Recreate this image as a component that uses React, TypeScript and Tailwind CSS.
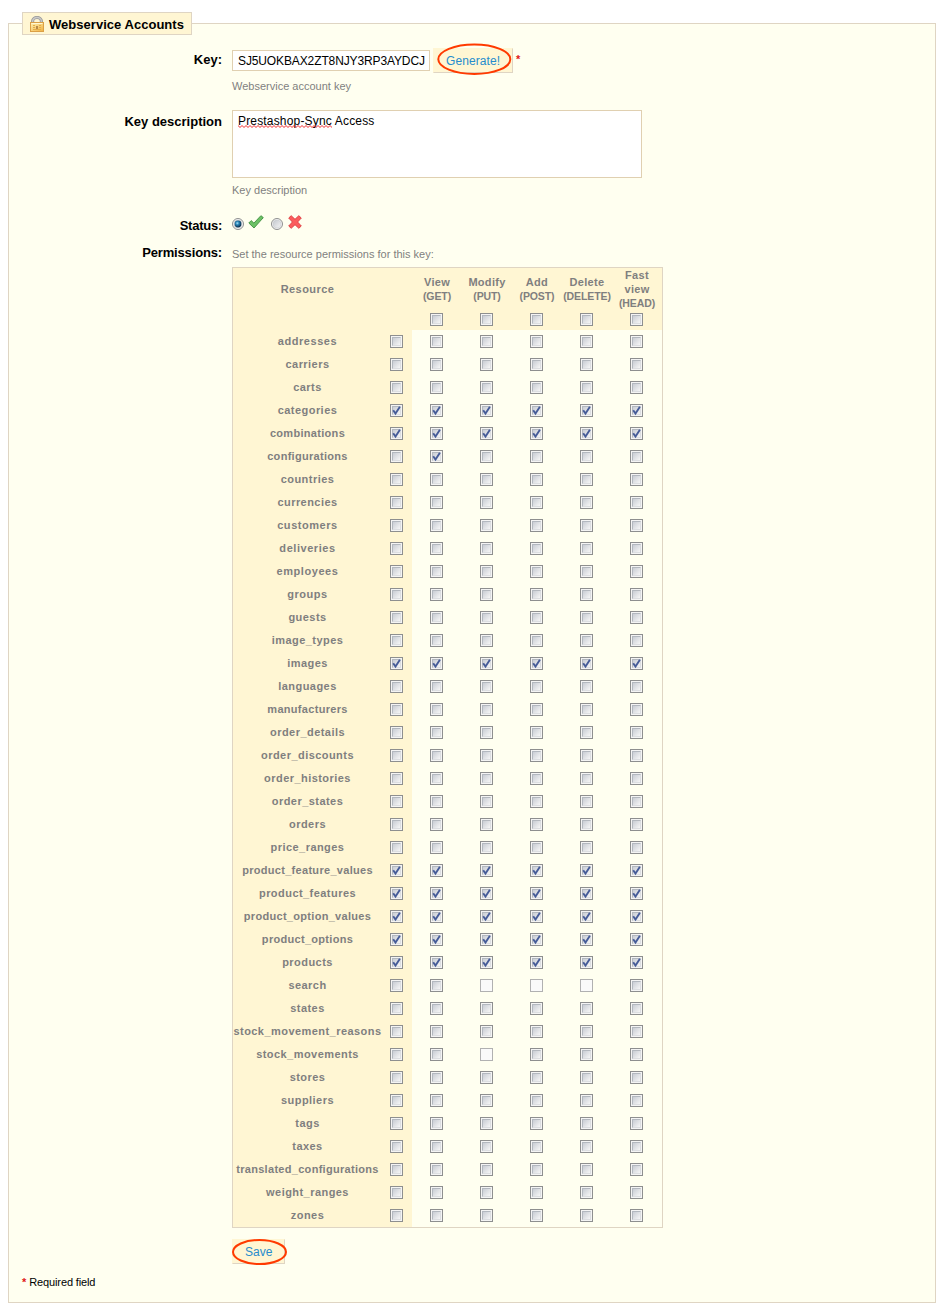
import React from "react";

type State = "on" | "off" | "disabled";

const METHODS: [string[], string][] = [
  [["View"], "(GET)"],
  [["Modify"], "(PUT)"],
  [["Add"], "(POST)"],
  [["Delete"], "(DELETE)"],
  [["Fast", "view"], "(HEAD)"],
];

const RESOURCES = [
  "addresses", "carriers", "carts", "categories", "combinations", "configurations",
  "countries", "currencies", "customers", "deliveries", "employees", "groups", "guests",
  "image_types", "images", "languages", "manufacturers", "order_details",
  "order_discounts", "order_histories", "order_states", "orders", "price_ranges",
  "product_feature_values", "product_features", "product_option_values",
  "product_options", "products", "search", "states", "stock_movement_reasons",
  "stock_movements", "stores", "suppliers", "tags", "taxes",
  "translated_configurations", "weight_ranges", "zones",
];

const FULL_ACCESS = new Set([
  "categories", "combinations", "images", "product_feature_values", "product_features",
  "product_option_values", "product_options", "products",
]);

const TIGHT = new Set([
  "combinations", "configurations", "manufacturers", "product_feature_values",
  "product_option_values", "product_options", "translated_configurations",
]);
const LOOSE = new Set(["addresses", "customers", "employees", "deliveries", "groups"]);

function trackingOf(resource: string) {
  if (TIGHT.has(resource)) return "tracking-[0.3px]";
  if (LOOSE.has(resource)) return "tracking-[0.55px]";
  return "tracking-[0.45px]";
}

// Column 0 is the "select all" box, columns 1-5 are the HTTP methods.
function stateOf(resource: string, column: number): State {
  if (FULL_ACCESS.has(resource)) return "on";
  if (resource === "configurations" && column === 1) return "on";
  if (resource === "search" && column >= 2 && column <= 4) return "disabled";
  if (resource === "stock_movements" && column === 2) return "disabled";
  return "off";
}

function Check({ state = "off" }: { state?: State }) {
  if (state === "disabled") {
    return <span className="block size-[13px] shrink-0 border border-[#b1b1b1] bg-[#fafafa]" />;
  }
  return (
    <span className="block size-[13px] shrink-0 border border-[#8e8f8f] bg-[#f4f4f4] p-px">
      <span className="block size-[9px] border border-t-[#b3b8bf] border-l-[#b3b8bf] border-r-[#dcdee1] border-b-[#dcdee1] bg-linear-to-br from-[#c9cdd4] to-[#f6f6f6]">
        {state === "on" && (
          <svg className="-mt-px -ml-px block size-[9px] overflow-visible" viewBox="0 0 9 9">
            <path d="M1.2 4.2 3.5 7.6 7.9 .8" fill="none" stroke="#465c98" strokeWidth="1.9" />
          </svg>
        )}
      </span>
    </span>
  );
}

function Radio({ on }: { on?: boolean }) {
  return (
    <svg className="block size-3 shrink-0" viewBox="0 0 12 12">
      <defs>
        <linearGradient id="radio-face" x1="0" y1="0" x2="1" y2="1">
          <stop offset="0" stopColor="#c3c7cd" />
          <stop offset="1" stopColor="#f5f5f5" />
        </linearGradient>
        <radialGradient id="radio-dot" cx=".4" cy=".38" r=".6">
          <stop offset="0" stopColor="#a9e2f7" />
          <stop offset=".4" stopColor="#2a86b8" />
          <stop offset="1" stopColor="#0b2e4d" />
        </radialGradient>
      </defs>
      <circle cx="6" cy="6" r="5.5" fill="#f4f4f4" stroke="#8e8f8f" />
      <circle cx="6" cy="6" r="4" fill="url(#radio-face)" stroke="#c4c8cc" strokeWidth=".5" />
      {on && <circle cx="6" cy="6" r="3.4" fill="url(#radio-dot)" />}
    </svg>
  );
}

function Lock() {
  return (
    <svg className="block h-4 w-[14px]" viewBox="0 0 14 16">
      <defs>
        <linearGradient id="lock-body" x1="0" y1="0" x2="1" y2="1">
          <stop offset="0" stopColor="#fff3b4" />
          <stop offset="1" stopColor="#f0b043" />
        </linearGradient>
      </defs>
      <path d="M2.6 6V5.4A4.4 3.9 0 0 1 11.4 5.4V6" fill="none" stroke="#9a9a9a" strokeWidth="3.2" />
      <path d="M2.6 6V5.4A4.4 3.9 0 0 1 11.4 5.4V6" fill="none" stroke="#c8c8c8" strokeWidth="1.4" />
      <rect x=".5" y="6.5" width="13" height="9" fill="url(#lock-body)" stroke="#dba046" />
      <path d="M1.5 7.5h11" stroke="#fff8d4" />
      <path d="M3 9.5h2M3 11.5h2M3 13.5h8M9 9.5h2M9 11.5h2" stroke="#e3ac48" />
      <rect x="6" y="10" width="2" height="3" fill="#b88a48" />
    </svg>
  );
}

function Tick() {
  return (
    <svg className="block h-[14px] w-4" viewBox="0 0 16 14">
      <path d="M.8 8 3.2 5.6 5.9 8.1 12.9 .7 15.3 2.6 6 13Z" fill="#6cc165" stroke="#3f8f41" strokeWidth=".9" strokeLinejoin="round" />
    </svg>
  );
}

function Cross() {
  return (
    <svg className="block size-[14px]" viewBox="0 0 14 14">
      <path d="M.7 3 3.2 .7 7 4.3 10.8 .7 13.3 3 9.6 7 13.3 11 10.8 13.3 7 9.7 3.2 13.3 .7 11 4.4 7Z" fill="#fb5c5c" stroke="#dc3a3f" strokeWidth=".9" strokeLinejoin="round" />
    </svg>
  );
}

function Label({ children }: { children: React.ReactNode }) {
  return <div className="w-[213px] shrink-0 pt-px text-right text-[13px] leading-4 font-bold whitespace-nowrap">{children}</div>;
}

function Hint({ children }: { children: React.ReactNode }) {
  return <p className="text-[11px] leading-[14px] whitespace-nowrap text-[#7f7f7f]">{children}</p>;
}

const BUTTON =
  "block h-[25px] border border-t-[#fff6d3] border-l-[#fff6d3] border-r-[#dfd5c3] border-b-[#dfd5c3] bg-[#fff6d3] pt-0.5 pl-3 text-left text-[12px] leading-[21px] text-[#268ccd]";

function PermissionTable() {
  return (
    <div className="w-[431px] border border-[#dfd5c3] text-center text-[11px] leading-[14px] font-bold tracking-[0.45px] text-[#7f7f7f]">
      <div className="flex h-[62px] bg-[#fff6d3]">
        <div className="flex h-[42px] w-[149px] items-center justify-center">Resource</div>
        <div className="w-[30px]" />
        {METHODS.map(([name, verb]) => (
          <div key={verb} className="w-[50px]">
            <div className="flex h-[42px] flex-col items-center justify-center tracking-[0.3px]">
              {name.map((line) => (
                <span key={line}>{line}</span>
              ))}
              <span className="text-[10.5px] tracking-[-0.1px]">{verb}</span>
            </div>
            <div className="mt-[3px] pl-[18px]">
              <Check />
            </div>
          </div>
        ))}
      </div>
      {RESOURCES.map((resource) => (
        <div key={resource} className="flex h-[23px]">
          <div className={`w-[149px] bg-[#fff6d3] pt-1 whitespace-nowrap ${trackingOf(resource)}`}>{resource}</div>
          <div className="flex w-[30px] items-center bg-[#fff6d3] pl-2">
            <Check state={stateOf(resource, 0)} />
          </div>
          {METHODS.map(([, verb], i) => (
            <div key={verb} className="flex w-[50px] items-center pl-[18px]">
              <Check state={stateOf(resource, i + 1)} />
            </div>
          ))}
        </div>
      ))}
    </div>
  );
}

export default function App() {
  return (
    <div className="h-[1312px] w-[945px] bg-white pt-[23px] pl-2 font-['Liberation_Sans',Arial,sans-serif] text-black">
      <div className="h-[1280px] w-[928px] border border-[#dfd5c3] bg-[#fffff0]">
        <h1 className="relative -mt-3 ml-[13px] flex h-[23px] w-[170px] items-start border border-[#dfd5c3] bg-[#fff6d3] pt-[3px] pl-[7px] text-[13px] leading-4 font-bold whitespace-nowrap">
          <Lock />
          <span className="ml-[5px] pt-px tracking-[0.03px]">Webservice Accounts</span>
        </h1>

        <div className="mt-[13px] flex h-[62px] gap-[10px]">
          <div className="pt-[3px]">
            <Label>Key:</Label>
          </div>
          <div>
            <div className="flex">
              <div className="mt-0.5 h-[21px] w-[198px] border border-[#e0d0b1] bg-white pt-px pl-[5px] text-[12px] leading-[19px] tracking-[-0.12px]">
                SJ5UOKBAX2ZT8NJY3RP3AYDCJ
              </div>
              <div className="relative ml-[3px]">
                <button className={`${BUTTON} w-20 tracking-[0.08px]`}>Generate!</button>
                <svg className="absolute top-[-5px] left-1 h-8 w-[75px]" viewBox="0 0 75 32">
                  <ellipse cx="37.3" cy="16.3" rx="36" ry="14.7" fill="none" stroke="#ff3a00" strokeWidth="2" />
                </svg>
              </div>
              <span className="ml-[3px] pt-1 text-[11px] leading-[14px] font-bold text-[#e01818]">*</span>
            </div>
            <div className="mt-[6px]">
              <Hint>Webservice account key</Hint>
            </div>
          </div>
        </div>

        <div className="flex h-[107px] gap-[10px]">
          <div className="pt-[3px]">
            <Label>Key description</Label>
          </div>
          <div>
            <div className="h-[68px] w-[410px] border border-[#e0d0b1] bg-white pt-[3px] pl-[5px] text-[12px] leading-[14px] tracking-[0.17px]">
              <span className="relative">
                Prestashop-Sync
                <svg className="absolute top-[11px] left-0 h-[3px] w-[94px]" viewBox="0 0 94 3">
                  <defs>
                    <pattern id="squiggle" width="4" height="3" patternUnits="userSpaceOnUse">
                      <path d="M-1 1.5 0 .5 2 2.5 4 .5 5 1.5" fill="none" stroke="#ee1010" strokeWidth=".9" />
                    </pattern>
                  </defs>
                  <rect width="94" height="3" fill="url(#squiggle)" />
                </svg>
              </span>{" "}
              Access
            </div>
            <div className="mt-[5px]">
              <Hint>Key description</Hint>
            </div>
          </div>
        </div>

        <div className="flex h-[27px] gap-[10px] tracking-[-0.25px]">
          <Label>Status:</Label>
          <div className="flex">
            <div className="pt-px"><Radio on /></div>
            <div className="ml-1 -mt-0.5"><Tick /></div>
            <div className="ml-[7px] pt-px"><Radio /></div>
            <div className="ml-[5px] -mt-0.5"><Cross /></div>
          </div>
        </div>

        <div className="flex gap-[10px]">
          <div className="tracking-[-0.15px]">
            <Label>Permissions:</Label>
          </div>
          <div>
            <div className="pt-[3px] pb-[6px]">
              <Hint>Set the resource permissions for this key:</Hint>
            </div>
            <PermissionTable />
            <div className="relative mt-[11px] w-[53px]">
              <button className={`${BUTTON} w-[53px]`}>Save</button>
              <svg className="absolute top-0 left-0 h-[26px] w-14" viewBox="0 0 56 26">
                <ellipse cx="27.5" cy="13" rx="26.5" ry="12" fill="none" stroke="#ff3a00" strokeWidth="2" />
              </svg>
            </div>
          </div>
        </div>

        <div className="mt-[11px] ml-[13px] flex gap-[3px] text-[11px] leading-[14px]">
          <span className="font-bold text-[#e01818]">*</span>
          <span className="tracking-[-0.13px]">Required field</span>
        </div>
      </div>
    </div>
  );
}
